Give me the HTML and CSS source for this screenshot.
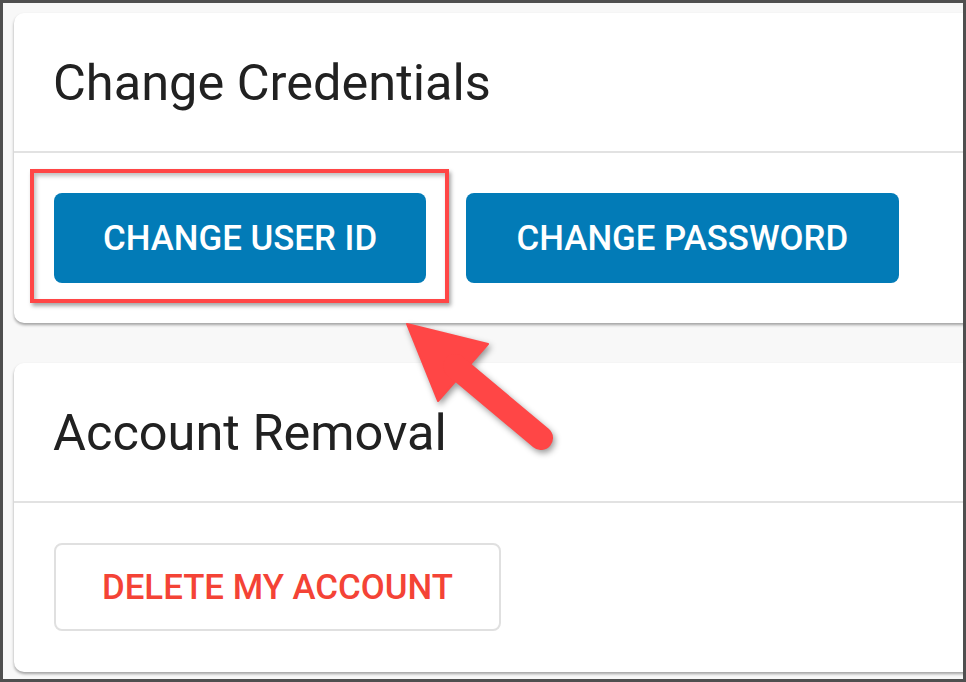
FILE: index.html
```html
<!DOCTYPE html>
<html lang="en">
<head>
<meta charset="utf-8">
<title>Change Credentials</title>
<link rel="stylesheet" href="styles.css">
</head>
<body>
<div class="frame">
  <section class="card card-first">
    <header class="card-head"><h2 class="card-title">Change Credentials</h2></header>
    <div class="card-body">
      <button class="btn btn-primary">CHANGE USER ID</button>
      <button class="btn btn-primary btn-wide">CHANGE PASSWORD</button>
    </div>
  </section>
  <section class="card">
    <header class="card-head"><h2 class="card-title">Account Removal</h2></header>
    <div class="card-body">
      <button class="btn btn-outline">DELETE MY ACCOUNT</button>
    </div>
  </section>

  <div class="highlight"></div>
  <svg class="arrow" viewBox="3 3 960 676" width="960" height="676" aria-hidden="true">
    <g fill="#ff4646" stroke="#ff4646">
      <polygon points="407,324 488,344 438,401" stroke-width="2" stroke-linejoin="round"/>
      <line x1="455" y1="366" x2="541" y2="438" stroke-width="24" stroke-linecap="round"/>
    </g>
  </svg>
</div>
</body>
</html>
```

FILE: styles.css
```css
html, body {
  margin: 0;
  padding: 0;
}
body {
  background: #4f4f4f;
  width: 966px;
  height: 682px;
  overflow: hidden;
  font-family: Roboto, "Liberation Sans", Arial, sans-serif;
}
.frame {
  position: relative;
  margin: 3px;
  width: 960px;
  height: 676px;
  background: #f8f8f8;
  overflow: hidden;
  padding: 10px 0 0 11px;
  box-sizing: border-box;
}
.card {
  width: 1000px;
  background: #fff;
  border-radius: 10px;
  box-shadow: 0 2px 3px rgba(0, 0, 0, 0.35);
}
.card-first {
  margin-bottom: 40px;
}
.card-head {
  padding: 40px 39px 38px;
  border-bottom: 2px solid #e2e2e2;
}
.card-title {
  margin: 0;
  font-size: 50.5px;
  font-weight: 400;
  line-height: 60px;
  color: #212121;
}
.card-body {
  display: flex;
  gap: 40px;
  padding: 40px 40px;
}
.card:last-of-type .card-body {
  padding-bottom: 41px;
}
.btn {
  font-family: Roboto, "Liberation Sans", Arial, sans-serif;
  font-weight: 500;
  font-size: 34.8px;
  border-radius: 8px;
  cursor: pointer;
  box-sizing: border-box;
}
.btn-primary {
  height: 90px;
  padding: 0 49px;
  background: #027bb7;
  color: #fff;
  border: none;
}
.btn-wide {
  padding: 0 50.5px;
}
.btn-outline {
  height: 88px;
  padding: 0 46px;
  background: #fff;
  color: #f44336;
  border: 2px solid #e0e0e0;
}
.highlight {
  position: absolute;
  left: 27px;
  top: 166px;
  width: 419px;
  height: 134px;
  box-sizing: border-box;
  border: 4px solid #ff4646;
  box-shadow: 2px 3px 4px rgba(0, 0, 0, 0.35), inset 2px 3px 4px rgba(0, 0, 0, 0.25);
}
.arrow {
  position: absolute;
  left: 0;
  top: 0;
  filter: drop-shadow(2px 3px 3px rgba(0, 0, 0, 0.4));
}
```
